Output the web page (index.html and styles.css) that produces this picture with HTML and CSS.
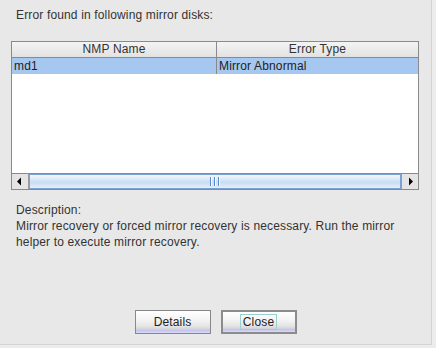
FILE: index.html
```html
<!DOCTYPE html>
<html>
<head>
<meta charset="utf-8">
<link rel="stylesheet" href="styles.css">
</head>
<body>
<div class="dialog">
  <div class="title">Error found in following mirror disks:</div>
  <div class="table">
    <div class="thead">
      <div class="th col1">NMP Name</div>
      <div class="th col2">Error Type</div>
    </div>
    <div class="row selected">
      <div class="td col1">md1</div>
      <div class="td col2">Mirror Abnormal</div>
    </div>
    <div class="body-space"></div>
    <div class="hscroll">
      <div class="sbtn left"><svg width="16" height="15" viewBox="0 0 16 15"><path d="M5 7.5 L9 3.5 L9 11.5 Z" fill="#000"/></svg></div>
      <div class="track">
        <div class="thumb"><span class="grip"></span><span class="grip"></span><span class="grip"></span></div>
      </div>
      <div class="sbtn right"><svg width="16" height="15" viewBox="0 0 16 15"><path d="M11 7.5 L7 3.5 L7 11.5 Z" fill="#000"/></svg></div>
    </div>
  </div>
  <div class="desc">
    <div>Description:</div>
    <div>Mirror recovery or forced mirror recovery is necessary. Run the mirror helper to execute mirror recovery.</div>
  </div>
  <div class="buttons">
    <button class="btn">Details</button>
    <button class="btn default"><span class="focus">Close</span></button>
  </div>
</div>
</body>
</html>
```
FILE: styles.css
```css
html, body {
  margin: 0;
  padding: 0;
  width: 436px;
  height: 348px;
  background: #ececec;
  overflow: hidden;
}
.dialog {
  box-sizing: border-box;
  width: 432px;
  height: 345px;
  border-right: 1px solid #d4d4d4;
  border-bottom: 1px solid #d4d4d4;
  background: #e8e8e8;
  font-family: "Liberation Sans", Arial, sans-serif;
  font-size: 12px;
  letter-spacing: 0.15px;
  color: #333;
  display: flex;
  flex-direction: column;
  padding: 7px 0 0 11px;
}
.title {
  line-height: 16px;
  padding-left: 5px;
  height: 16px;
  margin-bottom: 18px;
}
.table {
  box-sizing: border-box;
  width: 408px;
  height: 149px;
  border: 1px solid #8a8a8a;
  background: #fff;
  display: flex;
  flex-direction: column;
}
.thead {
  display: flex;
  height: 15px;
  border-bottom: 1px solid #8a8a8a;
  background: linear-gradient(#f4f4f4, #e2e2e2);
}
.th {
  box-sizing: border-box;
  line-height: 15px;
  text-align: center;
}
.col1 { width: 205px; border-right: 1px solid #8a8a8a; box-sizing: border-box; }
.col2 { flex: 1; }
.row {
  display: flex;
  height: 16px;
}
.row.selected { background: #a6c8f0; }
.td {
  line-height: 16px;
  padding-left: 2px;
  color: #222;
}
.body-space { flex: 1; }
.hscroll {
  display: flex;
  height: 15px;
  border-top: 1px solid #8a8a8a;
  background: #e6e6e6;
}
.sbtn {
  width: 16px;
  height: 15px;
  background: #e4e4e4;
  display: flex;
}
.sbtn.left { border-right: 1px solid #9a9a9a; }
.sbtn.right { border-left: 1px solid #9a9a9a; }
.track {
  flex: 1;
  display: flex;
}
.thumb {
  box-sizing: border-box;
  flex: 1;
  border: 1px solid #7aa0d4;
  background: linear-gradient(#f0f6fc 0%, #dfeaf7 30%, #c7dcf3 55%, #e6eef8 100%);
  display: flex;
  justify-content: center;
  align-items: center;
  gap: 2px;
}
.grip {
  width: 1px;
  height: 9px;
  background: #5a8ad0;
  border-right: 1px solid #fff;
}
.desc {
  margin-top: 12px;
  padding-left: 5px;
  line-height: 16px;
  width: 385px;
}
.buttons {
  margin-top: auto;
  margin-bottom: 10px;
  display: flex;
  justify-content: center;
  gap: 10px;
  padding-right: 11px;
}
.btn {
  box-sizing: border-box;
  width: 76px;
  height: 24px;
  font-family: "Liberation Sans", Arial, sans-serif;
  font-size: 12px;
  letter-spacing: 0.15px;
  color: #222;
  border: 1px solid #888;
  background: linear-gradient(#ffffff 0%, #f4f4f4 40%, #e4e4e4 70%, #d8d8d8 80%, #c4c4f0 88%, #d8dcf4 100%);
  padding: 0;
  display: flex;
  align-items: center;
  justify-content: center;
}
.btn.default {
  border: 2px solid #8c8c8c;
}
.focus {
  border: 1px solid #9ccfd0;
  padding: 0 2px;
  line-height: 14px;
}
```
